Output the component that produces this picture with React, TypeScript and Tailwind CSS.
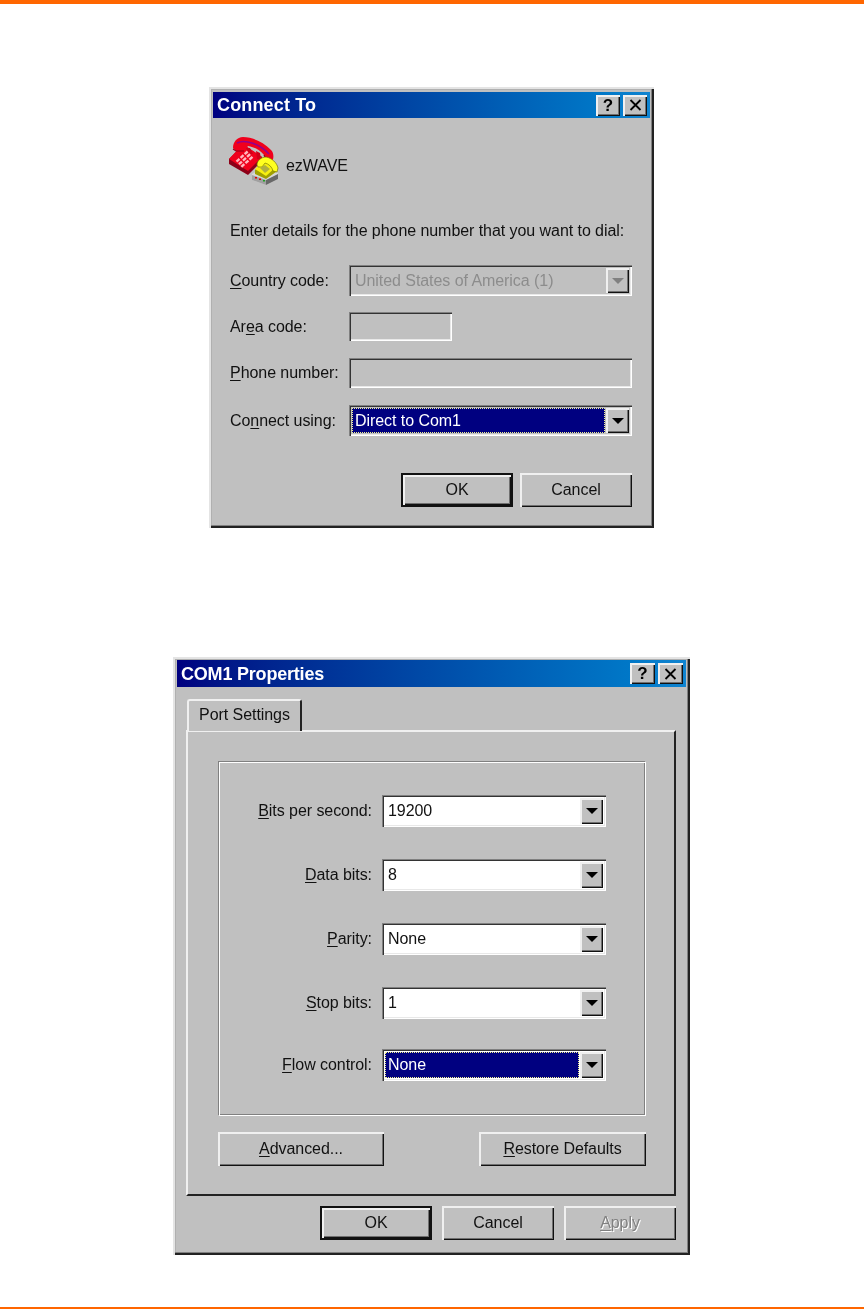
import React from "react";

const RAISED = "shadow-[inset_2px_2px_0_#f0f0f0,inset_-1px_-1px_0_#111,inset_-2px_-2px_0_#707070]";
const SUNKEN = "shadow-[inset_1px_1px_0_#808080,inset_2px_2px_0_#333,inset_-1px_-1px_0_#fff,inset_-2px_-2px_0_#e8e8e8]";
const FRAME = "shadow-[inset_2px_2px_0_#e4e4e4,inset_-2px_-2px_0_#222,inset_-3px_-3px_0_#808080,inset_3px_3px_0_#b0b0b0]";

function PhoneIcon() {
  return (
    <svg width="60" height="60" viewBox="0 0 60 60" className="shrink-0">
      {/* red body */}
      <polygon points="7,29 21,15 40,27 40,31 26,45 7,34" fill="#8c0018" />
      <polygon points="7,29 21,14 40,27 26,41" fill="#f0001c" />
      {/* red handset */}
      <path d="M11,18 C11,12 15,7 21,7 C30,7 42,12 49,20 C52,23 52,28 50,32 L46,33 L42,25 C38,20 32,17 26,16 L22,21 L14,21 Z" fill="#f0001c" />
      <path d="M15,13 C23,9 38,14 47,24" fill="none" stroke="#900090" strokeWidth="1.6" />
      <path d="M11,19 L14,21 L22,21 M42,25 L46,33 L50,32" fill="none" stroke="#900018" strokeWidth="1.2" />
      <polygon points="24,18 28,18 31,24 27,24" fill="#d00018" />
      <polygon points="34,21 38,23 39,30 35,29" fill="#d00018" />
      {/* keypad */}
      <g fill="#ffb8c0" transform="rotate(-42 23 29)">
        <rect x="15" y="24" width="4" height="2.4" /><rect x="20.5" y="24" width="4" height="2.4" /><rect x="26" y="24" width="4" height="2.4" />
        <rect x="15" y="27.6" width="4" height="2.4" /><rect x="20.5" y="27.6" width="4" height="2.4" /><rect x="26" y="27.6" width="4" height="2.4" />
        <rect x="15" y="31.2" width="4" height="2.4" /><rect x="20.5" y="31.2" width="4" height="2.4" /><rect x="26" y="31.2" width="4" height="2.4" />
      </g>
      {/* modem base */}
      <polygon points="30,44 42,38 56,43 56,49 44,55 30,50" fill="#d8d8d8" />
      <polygon points="30,45 44,50 44,55 30,50" fill="#a0a0a0" />
      <polygon points="44,50 56,44 56,49 44,55" fill="#686868" />
      <rect x="33" y="47" width="2" height="1.5" fill="#e00000" />
      <rect x="37" y="48.5" width="2" height="1.5" fill="#e00000" />
      <rect x="41" y="50" width="2" height="1.5" fill="#20a020" />
      {/* yellow phone */}
      <polygon points="33,40 42,32 54,38 54,42 44,49 33,44" fill="#a0a000" />
      <polygon points="33,39 42,31 54,37 44,46" fill="#f8f010" />
      <path d="M35,35 C35,30 40,27 44,27 C50,28 55,33 56,38 L55,42 L51,41 C50,37 47,34 43,33 L40,37 L36,37 Z" fill="#ffff20" stroke="#787800" strokeWidth="0.7" />
      <polygon points="38,38 43,35 48,39 43,43" fill="#b0b040" />
    </svg>
  );
}

function U({ children }: { children: React.ReactNode }) {
  return <u className="underline underline-offset-2">{children}</u>;
}

function TitleBar({ title, cls, btnCls, textCls }: { title: string; cls: string; btnCls: string; textCls: string }) {
  return (
    <div className={`flex items-center justify-between bg-linear-to-r from-[#000080] to-[#1084d0] pl-[4px] pr-[3px] ${cls}`}>
      <span className={`font-bold leading-none text-white ${textCls}`}>{title}</span>
      <div className="flex gap-[3px]">
        <div className={`flex h-[21px] items-center justify-center bg-[#c0c0c0] text-[17px] font-bold leading-none text-black ${RAISED} ${btnCls}`}>?</div>
        <div className={`flex h-[21px] items-center justify-center bg-[#c0c0c0] ${RAISED} ${btnCls}`}>
          <svg width="13" height="12" viewBox="0 0 13 12"><path d="M1.5 1 L11.5 11 M11.5 1 L1.5 11" stroke="#000" strokeWidth="1.8" /></svg>
        </div>
      </div>
    </div>
  );
}

function Arrow({ disabled }: { disabled?: boolean }) {
  return (
    <div className={`flex w-[23px] shrink-0 items-center justify-center bg-[#c0c0c0] ${RAISED}`}>
      <svg width="12" height="6" viewBox="0 0 12 6"><polygon points="0,0 12,0 6,6" fill={disabled ? "#808080" : "#000"} /></svg>
    </div>
  );
}

function Combo({ text, white, selected, disabled, cls }: { text: string; white?: boolean; selected?: boolean; disabled?: boolean; cls: string }) {
  return (
    <div className={`flex p-[3px] ${white ? "bg-white" : "bg-[#c0c0c0]"} ${SUNKEN} ${cls}`}>
      <div className="flex min-w-0 flex-1 pr-[1px]">
        {selected ? (
          <div className="flex flex-1 items-center border border-dotted border-[#f0f090] bg-[#000080] pl-[2px] text-white">{text}</div>
        ) : (
          <div className={`flex flex-1 items-center pl-[3px] ${disabled ? "text-[#8c8c8c]" : "text-[#111]"}`}>{text}</div>
        )}
      </div>
      <Arrow disabled={disabled} />
    </div>
  );
}

function Btn({ children, w, isDefault, disabled }: { children: React.ReactNode; w: string; isDefault?: boolean; disabled?: boolean }) {
  const inner = (
    <div className={`flex h-full w-full items-center justify-center bg-[#c0c0c0] ${RAISED} ${disabled ? "text-[#808080] [text-shadow:1px_1px_0_#fff]" : "text-[#111]"}`}>{children}</div>
  );
  return <div className={`h-[34px] ${w} ${isDefault ? "border-2 border-[#111]" : ""}`}>{inner}</div>;
}

function FormRow({ label, children }: { label: React.ReactNode; children: React.ReactNode }) {
  return (
    <div className="flex items-center">
      <div className="w-[119px] shrink-0 text-[#111]">{label}</div>
      {children}
    </div>
  );
}

function PortRow({ label, value, selected }: { label: React.ReactNode; value: string; selected?: boolean }) {
  return (
    <div className="flex items-center gap-[10px]">
      <div className="w-[153px] text-right text-[#111]">{label}</div>
      <Combo text={value} white selected={selected} cls="h-[32px] w-[224px]" />
    </div>
  );
}

export default function App() {
  return (
    <div className="flex h-[1309px] w-full flex-col bg-white text-[16px] leading-5 tracking-[-0.06px] [font-family:'Liberation_Sans',sans-serif]">
      <div className="h-[4px] shrink-0 bg-[#ff6600]" />

      <div className={`ml-[209px] mt-[83px] flex h-[441px] w-[445px] shrink-0 flex-col bg-[#c0c0c0] px-[4px] pt-[5px] blur-[0.3px] ${FRAME}`}>
        <TitleBar title="Connect To" cls="h-[26px]" btnCls="w-[24px]" textCls="text-[18px] tracking-[0.15px]" />
        <div className="flex flex-col pl-[17px] pr-[18px]">
          <div className="-ml-[8px] mt-[12px] flex items-center gap-[4px] text-[#111]">
            <PhoneIcon />
            <span className="mt-[12px]">ezWAVE</span>
          </div>
          <div className="mt-[31px] whitespace-nowrap text-[#111]">Enter details for the phone number that you want to dial:</div>
          <div className="mt-[24px]">
            <FormRow label={<><U>C</U>ountry code:</>}>
              <Combo text="United States of America (1)" disabled cls="h-[31px] w-[283px]" />
            </FormRow>
          </div>
          <div className="mt-[16px]">
            <FormRow label={<>Ar<U>e</U>a code:</>}>
              <div className={`h-[29px] w-[103px] ${SUNKEN}`} />
            </FormRow>
          </div>
          <div className="mt-[17px]">
            <FormRow label={<><U>P</U>hone number:</>}>
              <div className={`h-[30px] w-[283px] ${SUNKEN}`} />
            </FormRow>
          </div>
          <div className="mt-[17px]">
            <FormRow label={<>Co<U>n</U>nect using:</>}>
              <Combo text="Direct to Com1" selected cls="h-[31px] w-[283px]" />
            </FormRow>
          </div>
          <div className="mt-[37px] flex justify-end gap-[7px]">
            <Btn w="w-[112px]" isDefault>OK</Btn>
            <Btn w="w-[112px]">Cancel</Btn>
          </div>
        </div>
      </div>

      <div className={`ml-[173px] mt-[129px] flex h-[598px] w-[517px] shrink-0 flex-col bg-[#c0c0c0] px-[4px] pt-[3px] blur-[0.3px] ${FRAME}`}>
        <TitleBar title="COM1 Properties" cls="h-[27px]" btnCls="w-[25px]" textCls="text-[18px] tracking-[-0.2px]" />
        <div className="ml-[9px] mr-[10px] mt-[12px] flex flex-col">
          <div className="relative z-10 -mb-[1px] ml-[1px] flex h-[32px] w-[115px] items-center justify-center rounded-t-[3px] border-l-2 border-r-2 border-t-2 border-l-[#f0f0f0] border-r-[#222] border-t-[#f0f0f0] bg-[#c0c0c0] pb-[2px] text-[#111]">
            Port Settings
          </div>
          <div className="flex h-[466px] flex-col border-b-2 border-l-2 border-r-2 border-t-2 border-b-[#222] border-l-[#f0f0f0] border-r-[#222] border-t-[#f0f0f0] pl-[30px] pt-[29px]">
            <div className="flex h-[355px] w-[428px] flex-col gap-[32px] border border-b-white border-l-[#808080] border-r-white border-t-[#808080] pt-[33px] shadow-[inset_1px_1px_0_#fff,inset_-1px_-1px_0_#808080]">
              <PortRow label={<><U>B</U>its per second:</>} value="19200" />
              <PortRow label={<><U>D</U>ata bits:</>} value="8" />
              <PortRow label={<><U>P</U>arity:</>} value="None" />
              <PortRow label={<><U>S</U>top bits:</>} value="1" />
              <div className="-mt-[2px]">
                <PortRow label={<><U>F</U>low control:</>} value="None" selected />
              </div>
            </div>
            <div className="mt-[16px] flex w-[428px] justify-between">
              <Btn w="w-[166px]"><span><U>A</U>dvanced...</span></Btn>
              <Btn w="w-[167px]"><span><U>R</U>estore Defaults</span></Btn>
            </div>
          </div>
          <div className="mt-[10px] flex justify-end gap-[10px]">
            <Btn w="w-[112px]" isDefault>OK</Btn>
            <Btn w="w-[112px]">Cancel</Btn>
            <Btn w="w-[112px]" disabled><span><U>A</U>pply</span></Btn>
          </div>
        </div>
      </div>

      <div className="mt-auto h-[2px] shrink-0 bg-[#ff6600]" />
    </div>
  );
}
